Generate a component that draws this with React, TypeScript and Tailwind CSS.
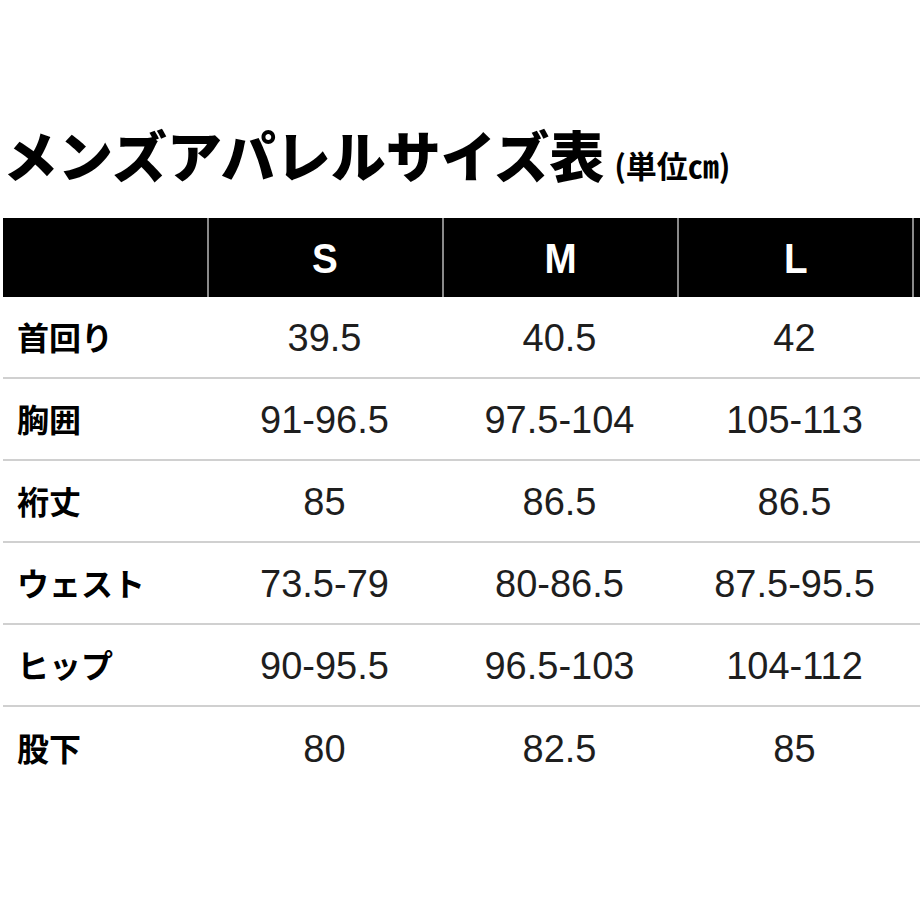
const sizes = ["S", "M", "L"];

const rows: { label: string; values: string[] }[] = [
  { label: "首回り", values: ["39.5", "40.5", "42"] },
  { label: "胸囲", values: ["91-96.5", "97.5-104", "105-113"] },
  { label: "裄丈", values: ["85", "86.5", "86.5"] },
  { label: "ウェスト", values: ["73.5-79", "80-86.5", "87.5-95.5"] },
  { label: "ヒップ", values: ["90-95.5", "96.5-103", "104-112"] },
  { label: "股下", values: ["80", "82.5", "85"] },
];

const grid = "grid grid-cols-[204px_235px_235px_235px_235px]";

export default function App() {
  return (
    <div className="h-[920px] w-[920px] overflow-hidden bg-white font-['Noto_Sans_CJK_JP',sans-serif] text-black">
      {/* タイトル */}
      <div className="flex items-end pl-[3px] pt-[126px]">
        <h1 className="text-[55px] font-black leading-none">
          メンズアパレルサイズ表
        </h1>
        <span className="mb-[1px] ml-[10px] text-[31px] font-bold leading-none">
          (単位㎝)
        </span>
      </div>

      {/* 表 */}
      <div className="ml-[3px] mt-[37px] w-[1200px]">
        <div className={`${grid} h-[79px] bg-black`}>
          <div />
          {[...sizes, ""].map((s, i) => (
            <div
              key={i}
              className="flex items-center justify-center border-l-2 border-[#8a8a8a] pt-[2px] font-['Liberation_Sans',sans-serif] text-[42px] font-bold leading-none text-white"
            >
              <span className="inline-block scale-x-[0.92]">{s}</span>
            </div>
          ))}
        </div>

        {rows.map((row, i) => (
          <div
            key={row.label}
            className={`${grid} h-[82px] ${i < rows.length - 1 ? "border-b-2 border-[#d0d0d0]" : ""}`}
          >
            <div className="flex items-center pb-[2px] pl-[14px] text-[32px] font-bold leading-none">
              {row.label}
            </div>
            {row.values.map((v, j) => (
              <div
                key={j}
                className="flex items-center justify-center pt-[2px] font-['Liberation_Sans',sans-serif] text-[38px] leading-none text-[#1e1e1e]"
              >
                {v}
              </div>
            ))}
            <div />
          </div>
        ))}
      </div>
    </div>
  );
}
